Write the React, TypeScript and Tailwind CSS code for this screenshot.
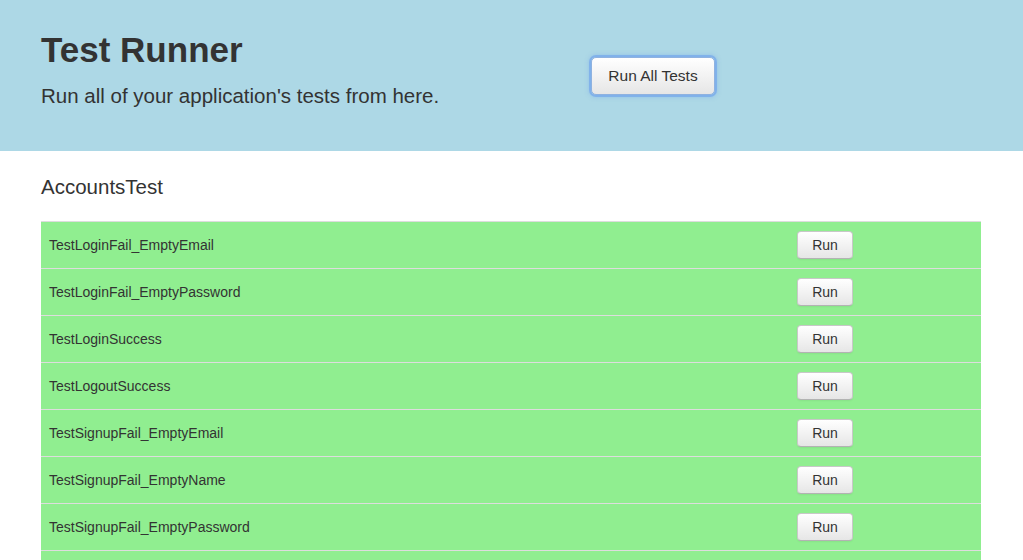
const tests = [
  'TestLoginFail_EmptyEmail',
  'TestLoginFail_EmptyPassword',
  'TestLoginSuccess',
  'TestLogoutSuccess',
  'TestSignupFail_EmptyEmail',
  'TestSignupFail_EmptyName',
  'TestSignupFail_EmptyPassword',
  'TestSignupSuccess',
]

function RunButton({ label, large }: { label: string; large?: boolean }) {
  if (large) {
    return (
      <button className="h-[38px] w-[124px] rounded-[5px] border border-[#8fb2e0] bg-gradient-to-b from-white to-[#e6e6e6] text-[15.5px] text-[#333] shadow-[0_0_0_2px_rgba(120,170,235,0.75),0_0_4px_2px_rgba(120,170,235,0.5)]">
        {label}
      </button>
    )
  }
  return (
    <button className="h-[28px] w-[56px] rounded-[4px] border border-[#c8c8c8] border-b-[#b3b3b3] bg-gradient-to-b from-white to-[#e6e6e6] text-[14px] leading-[20px] text-[#333] shadow-[inset_0_1px_0_rgba(255,255,255,0.2),0_1px_2px_rgba(0,0,0,0.05)]">
      {label}
    </button>
  )
}

export default function App() {
  return (
    <div className="min-h-[560px] bg-white font-['Liberation_Sans',Arial,sans-serif] text-[#333]">
      <header className="flex h-[151px] items-center bg-[#add8e6] px-[41px]">
        <div className="w-[550px] pb-[10px]">
          <h1 className="text-[35px] font-bold leading-[40px]">Test Runner</h1>
          <p className="mt-[11px] text-[20.5px] leading-[30px]">Run all of your application's tests from here.</p>
        </div>
        <RunButton label="Run All Tests" large />
      </header>

      <main className="px-[41px]">
        <h3 className="mt-[21px] text-[20.5px] leading-[30px]">AccountsTest</h3>
        <div className="mt-[19px] w-[940px]">
          {tests.map((name) => (
            <div key={name} className="flex h-[47px] items-center border-t border-[#dddddd] bg-[#90ee90]">
              <div className="w-[756px] pl-2 text-[14px]">{name}</div>
              <RunButton label="Run" />
            </div>
          ))}
        </div>
      </main>
    </div>
  )
}
